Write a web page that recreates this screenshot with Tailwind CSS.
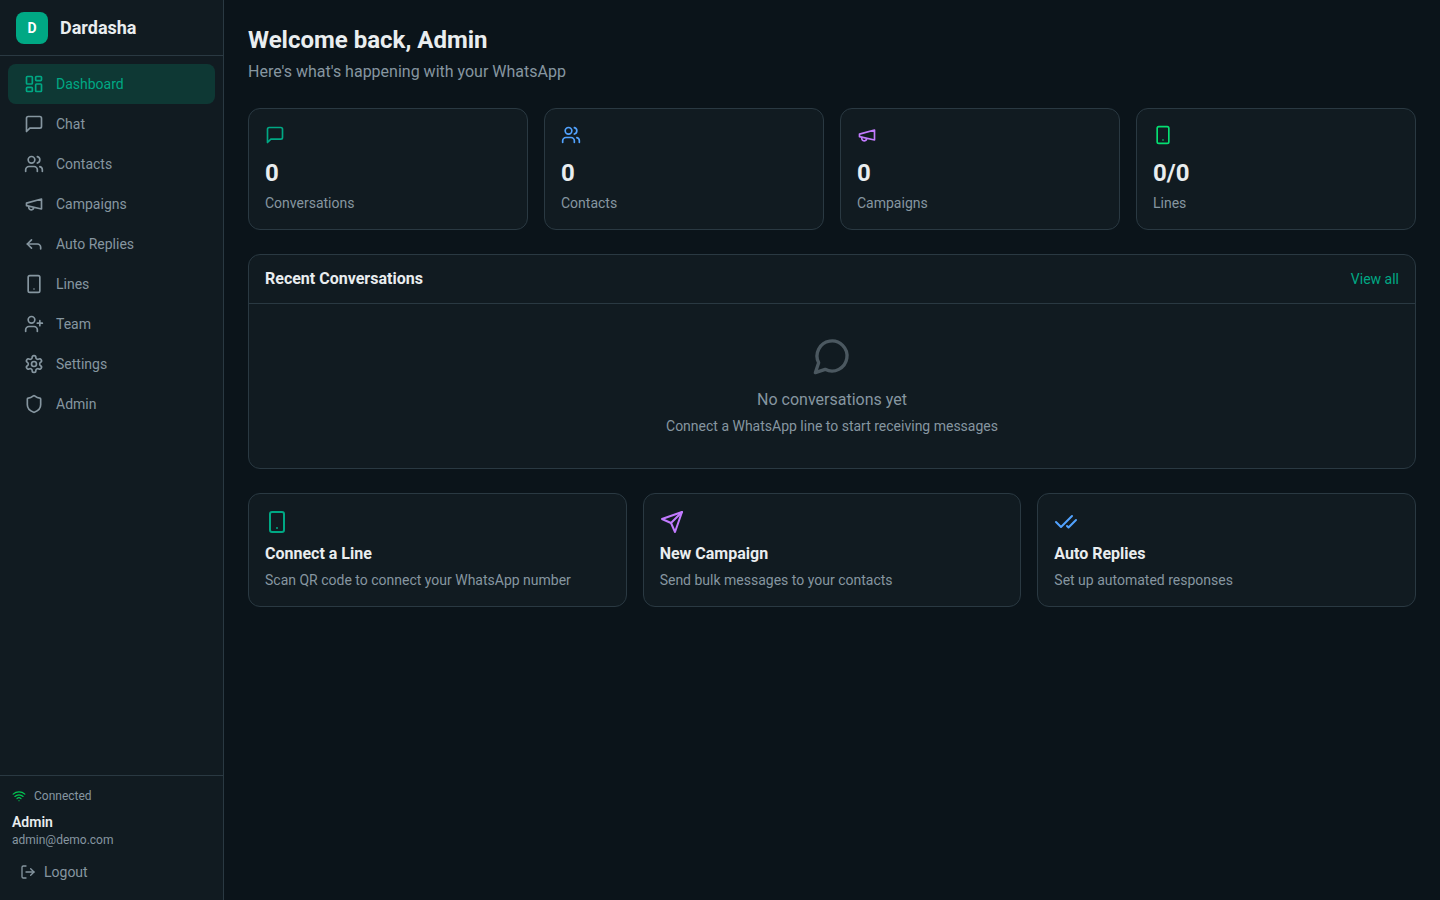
<!DOCTYPE html>
<html lang="en">
<head>
    <meta charset="UTF-8">
    <meta name="viewport" content="width=device-width, initial-scale=1.0">
    <title>Dardasha</title>
    <script src="https://cdn.jsdelivr.net/npm/@tailwindcss/browser@4"></script>
</head>
<body class="h-screen overflow-hidden bg-[#0b141a] text-[#e9edef] font-['Roboto',sans-serif] flex">

    <!-- Sidebar -->
    <aside class="w-56 h-full shrink-0 bg-[#111b21] border-r border-[#2a3942] flex flex-col">
        <div class="h-14 shrink-0 px-4 flex items-center gap-3 border-b border-[#2a3942]">
            <div class="w-8 h-8 rounded-lg bg-[#00a884] flex items-center justify-center text-sm font-bold text-white">D</div>
            <span class="text-lg font-bold">Dardasha</span>
        </div>

        <nav class="flex-1 p-2 flex flex-col text-sm text-[#8696a0]">
            <a class="h-10 px-4 flex items-center gap-3 rounded-lg bg-[#00a884]/20 text-[#00a884]">
                <svg class="w-5 h-5" viewBox="0 0 24 24" fill="none" stroke="currentColor" stroke-width="2" stroke-linecap="round" stroke-linejoin="round"><rect x="3" y="3" width="7" height="9" rx="1"/><rect x="14" y="3" width="7" height="5" rx="1"/><rect x="14" y="12" width="7" height="9" rx="1"/><rect x="3" y="16" width="7" height="5" rx="1"/></svg>
                Dashboard
            </a>
            <a class="h-10 px-4 flex items-center gap-3 rounded-lg">
                <svg class="w-5 h-5" viewBox="0 0 24 24" fill="none" stroke="currentColor" stroke-width="2" stroke-linecap="round" stroke-linejoin="round"><path d="M21 15a2 2 0 0 1-2 2H7l-4 4V5a2 2 0 0 1 2-2h14a2 2 0 0 1 2 2z"/></svg>
                Chat
            </a>
            <a class="h-10 px-4 flex items-center gap-3 rounded-lg">
                <svg class="w-5 h-5" viewBox="0 0 24 24" fill="none" stroke="currentColor" stroke-width="2" stroke-linecap="round" stroke-linejoin="round"><path d="M16 21v-2a4 4 0 0 0-4-4H6a4 4 0 0 0-4 4v2"/><circle cx="9" cy="7" r="4"/><path d="M22 21v-2a4 4 0 0 0-3-3.87"/><path d="M16 3.13a4 4 0 0 1 0 7.75"/></svg>
                Contacts
            </a>
            <a class="h-10 px-4 flex items-center gap-3 rounded-lg">
                <svg class="w-5 h-5" viewBox="0 0 24 24" fill="none" stroke="currentColor" stroke-width="2" stroke-linecap="round" stroke-linejoin="round"><path d="m3 11 18-5v12L3 14v-3z"/><path d="M11.6 16.8a3 3 0 1 1-5.8-1.6"/></svg>
                Campaigns
            </a>
            <a class="h-10 px-4 flex items-center gap-3 rounded-lg">
                <svg class="w-5 h-5" viewBox="0 0 24 24" fill="none" stroke="currentColor" stroke-width="2" stroke-linecap="round" stroke-linejoin="round"><polyline points="9 17 4 12 9 7"/><path d="M20 18v-2a4 4 0 0 0-4-4H4"/></svg>
                Auto Replies
            </a>
            <a class="h-10 px-4 flex items-center gap-3 rounded-lg">
                <svg class="w-5 h-5" viewBox="0 0 24 24" fill="none" stroke="currentColor" stroke-width="2" stroke-linecap="round" stroke-linejoin="round"><rect x="5" y="2" width="14" height="20" rx="2"/><path d="M12 18h.01"/></svg>
                Lines
            </a>
            <a class="h-10 px-4 flex items-center gap-3 rounded-lg">
                <svg class="w-5 h-5" viewBox="0 0 24 24" fill="none" stroke="currentColor" stroke-width="2" stroke-linecap="round" stroke-linejoin="round"><path d="M16 21v-2a4 4 0 0 0-4-4H6a4 4 0 0 0-4 4v2"/><circle cx="9" cy="7" r="4"/><line x1="19" y1="8" x2="19" y2="14"/><line x1="22" y1="11" x2="16" y2="11"/></svg>
                Team
            </a>
            <a class="h-10 px-4 flex items-center gap-3 rounded-lg">
                <svg class="w-5 h-5" viewBox="0 0 24 24" fill="none" stroke="currentColor" stroke-width="2" stroke-linecap="round" stroke-linejoin="round"><path d="M12.22 2h-.44a2 2 0 0 0-2 2v.18a2 2 0 0 1-1 1.73l-.43.25a2 2 0 0 1-2 0l-.15-.08a2 2 0 0 0-2.73.73l-.22.38a2 2 0 0 0 .73 2.73l.15.1a2 2 0 0 1 1 1.72v.51a2 2 0 0 1-1 1.74l-.15.09a2 2 0 0 0-.73 2.73l.22.38a2 2 0 0 0 2.73.73l.15-.08a2 2 0 0 1 2 0l.43.25a2 2 0 0 1 1 1.73V20a2 2 0 0 0 2 2h.44a2 2 0 0 0 2-2v-.18a2 2 0 0 1 1-1.73l.43-.25a2 2 0 0 1 2 0l.15.08a2 2 0 0 0 2.73-.73l.22-.39a2 2 0 0 0-.73-2.73l-.15-.08a2 2 0 0 1-1-1.74v-.5a2 2 0 0 1 1-1.74l.15-.09a2 2 0 0 0 .73-2.73l-.22-.38a2 2 0 0 0-2.73-.73l-.15.08a2 2 0 0 1-2 0l-.43-.25a2 2 0 0 1-1-1.73V4a2 2 0 0 0-2-2z"/><circle cx="12" cy="12" r="3"/></svg>
                Settings
            </a>
            <a class="h-10 px-4 flex items-center gap-3 rounded-lg">
                <svg class="w-5 h-5" viewBox="0 0 24 24" fill="none" stroke="currentColor" stroke-width="2" stroke-linecap="round" stroke-linejoin="round"><path d="M20 13c0 5-3.5 7.5-7.66 8.95a1 1 0 0 1-.67-.01C7.5 20.5 4 18 4 13V6a1 1 0 0 1 1-1c2 0 4.5-1.2 6.24-2.72a1.17 1.17 0 0 1 1.52 0C14.51 3.81 17 5 19 5a1 1 0 0 1 1 1z"/></svg>
                Admin
            </a>
        </nav>

        <!-- Account -->
        <div class="shrink-0 border-t border-[#2a3942] px-3 pt-3 pb-2">
            <div class="flex items-center gap-2 text-xs text-[#8696a0] mb-2">
                <svg class="w-3.5 h-3.5 text-green-500" viewBox="0 0 24 24" fill="none" stroke="currentColor" stroke-width="2" stroke-linecap="round" stroke-linejoin="round"><path d="M12 20h.01"/><path d="M2 8.82a15 15 0 0 1 20 0"/><path d="M5 12.859a10 10 0 0 1 14 0"/><path d="M8.5 16.429a5 5 0 0 1 7 0"/></svg>
                Connected
            </div>
            <p class="text-sm font-semibold">Admin</p>
            <p class="text-xs text-[#8696a0] mb-1">admin@demo.com</p>
            <a class="h-10 px-2 flex items-center gap-2 text-sm text-[#8696a0]">
                <svg class="w-4 h-4" viewBox="0 0 24 24" fill="none" stroke="currentColor" stroke-width="2" stroke-linecap="round" stroke-linejoin="round"><path d="M9 21H5a2 2 0 0 1-2-2V5a2 2 0 0 1 2-2h4"/><polyline points="16 17 21 12 16 7"/><line x1="21" y1="12" x2="9" y2="12"/></svg>
                Logout
            </a>
        </div>
    </aside>

    <!-- Main -->
    <main class="flex-1 p-6">
        <h1 class="text-2xl font-bold">Welcome back, Admin</h1>
        <p class="mt-1 mb-6 text-[#8696a0]">Here's what's happening with your WhatsApp</p>

        <!-- Stats -->
        <div class="grid grid-cols-4 gap-4 mb-6">
            <div class="bg-[#111b21] border border-[#2a3942] rounded-xl p-4">
                <svg class="w-5 h-5 mb-3 text-[#00a884]" viewBox="0 0 24 24" fill="none" stroke="currentColor" stroke-width="2" stroke-linecap="round" stroke-linejoin="round"><path d="M21 15a2 2 0 0 1-2 2H7l-4 4V5a2 2 0 0 1 2-2h14a2 2 0 0 1 2 2z"/></svg>
                <p class="text-2xl font-bold">0</p>
                <p class="mt-1 text-sm text-[#8696a0]">Conversations</p>
            </div>
            <div class="bg-[#111b21] border border-[#2a3942] rounded-xl p-4">
                <svg class="w-5 h-5 mb-3 text-blue-400" viewBox="0 0 24 24" fill="none" stroke="currentColor" stroke-width="2" stroke-linecap="round" stroke-linejoin="round"><path d="M16 21v-2a4 4 0 0 0-4-4H6a4 4 0 0 0-4 4v2"/><circle cx="9" cy="7" r="4"/><path d="M22 21v-2a4 4 0 0 0-3-3.87"/><path d="M16 3.13a4 4 0 0 1 0 7.75"/></svg>
                <p class="text-2xl font-bold">0</p>
                <p class="mt-1 text-sm text-[#8696a0]">Contacts</p>
            </div>
            <div class="bg-[#111b21] border border-[#2a3942] rounded-xl p-4">
                <svg class="w-5 h-5 mb-3 text-purple-400" viewBox="0 0 24 24" fill="none" stroke="currentColor" stroke-width="2" stroke-linecap="round" stroke-linejoin="round"><path d="m3 11 18-5v12L3 14v-3z"/><path d="M11.6 16.8a3 3 0 1 1-5.8-1.6"/></svg>
                <p class="text-2xl font-bold">0</p>
                <p class="mt-1 text-sm text-[#8696a0]">Campaigns</p>
            </div>
            <div class="bg-[#111b21] border border-[#2a3942] rounded-xl p-4">
                <svg class="w-5 h-5 mb-3 text-green-400" viewBox="0 0 24 24" fill="none" stroke="currentColor" stroke-width="2" stroke-linecap="round" stroke-linejoin="round"><rect x="5" y="2" width="14" height="20" rx="2"/><path d="M12 18h.01"/></svg>
                <p class="text-2xl font-bold">0/0</p>
                <p class="mt-1 text-sm text-[#8696a0]">Lines</p>
            </div>
        </div>

        <!-- Recent conversations -->
        <section class="bg-[#111b21] border border-[#2a3942] rounded-xl mb-6">
            <div class="px-4 py-3 flex items-center justify-between border-b border-[#2a3942]">
                <h2 class="font-bold">Recent Conversations</h2>
                <a class="text-sm text-[#00a884]">View all</a>
            </div>
            <div class="py-8 flex flex-col items-center text-center text-[#8696a0]">
                <svg class="w-10 h-10 mb-3 text-[#8696a0]/50" viewBox="0 0 24 24" fill="none" stroke="currentColor" stroke-width="2" stroke-linecap="round" stroke-linejoin="round"><path d="M7.9 20A9 9 0 1 0 4 16.1L2 22Z"/></svg>
                <p>No conversations yet</p>
                <p class="mt-1 text-sm">Connect a WhatsApp line to start receiving messages</p>
            </div>
        </section>

        <!-- Quick actions -->
        <div class="grid grid-cols-3 gap-4">
            <div class="bg-[#111b21] border border-[#2a3942] rounded-xl p-4">
                <svg class="w-6 h-6 mb-2 text-[#00a884]" viewBox="0 0 24 24" fill="none" stroke="currentColor" stroke-width="2" stroke-linecap="round" stroke-linejoin="round"><rect x="5" y="2" width="14" height="20" rx="2"/><path d="M12 18h.01"/></svg>
                <h3 class="font-bold">Connect a Line</h3>
                <p class="mt-1 text-sm text-[#8696a0]">Scan QR code to connect your WhatsApp number</p>
            </div>
            <div class="bg-[#111b21] border border-[#2a3942] rounded-xl p-4">
                <svg class="w-6 h-6 mb-2 text-purple-400" viewBox="0 0 24 24" fill="none" stroke="currentColor" stroke-width="2" stroke-linecap="round" stroke-linejoin="round"><path d="m22 2-7 20-4-9-9-4Z"/><path d="M22 2 11 13"/></svg>
                <h3 class="font-bold">New Campaign</h3>
                <p class="mt-1 text-sm text-[#8696a0]">Send bulk messages to your contacts</p>
            </div>
            <div class="bg-[#111b21] border border-[#2a3942] rounded-xl p-4">
                <svg class="w-6 h-6 mb-2 text-blue-400" viewBox="0 0 24 24" fill="none" stroke="currentColor" stroke-width="2" stroke-linecap="round" stroke-linejoin="round"><path d="M18 6 7 17l-5-5"/><path d="m22 10-7.5 7.5L13 16"/></svg>
                <h3 class="font-bold">Auto Replies</h3>
                <p class="mt-1 text-sm text-[#8696a0]">Set up automated responses</p>
            </div>
        </div>
    </main>
</body>
</html>
